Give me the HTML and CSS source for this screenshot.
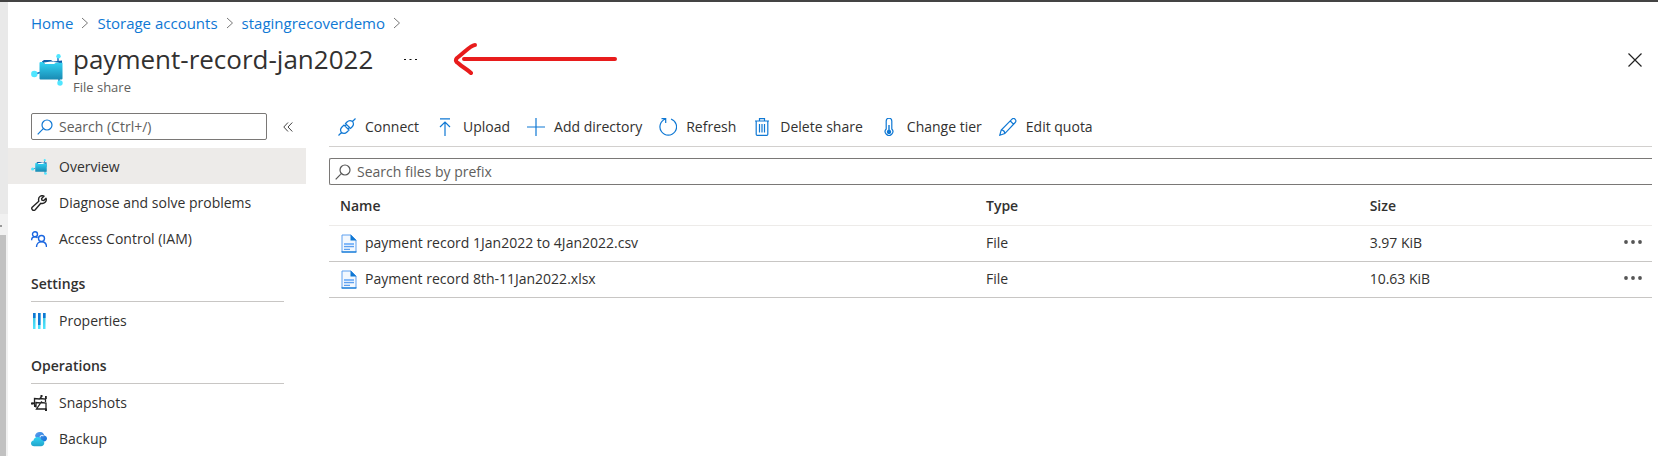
FILE: index.html
```html
<!DOCTYPE html>
<html lang="en">
<head>
<meta charset="utf-8">
<meta name="viewport" content="width=device-width, initial-scale=1">
<title>payment-record-jan2022 - File share</title>
<link rel="stylesheet" href="styles.css">
</head>
<body>
<svg class="defs" aria-hidden="true">
  <defs>
    <linearGradient id="cyan" x1="0" y1="0" x2="0" y2="1"><stop offset="0" stop-color="#32d4f5"/><stop offset="1" stop-color="#198ab3"/></linearGradient>
    <linearGradient id="bars" x1="0" y1="0" x2="0" y2="1"><stop offset="0" stop-color="#32bedd"/><stop offset="1" stop-color="#50e6ff"/></linearGradient>
    <linearGradient id="blue" x1="0" y1="0" x2="1" y2="1"><stop offset="0" stop-color="#5ea0ef"/><stop offset="1" stop-color="#0f6fd6"/></linearGradient>
    <linearGradient id="cloud" x1="0" y1="0" x2="0" y2="1"><stop offset="0" stop-color="#32d4f5"/><stop offset="1" stop-color="#22a5cb"/></linearGradient>
    <symbol id="share" viewBox="0 0 32 32">
      <path d="M4 20 9 18.500M27 7V3M28 24v5" stroke="#0f6cbd" stroke-width="1.400" fill="none"/>
      <path d="M11 7.500 13 6h7l2 1.500 9-1v9H11z" fill="#0f5fa8"/>
      <path d="M13 8.500 20 7.500l8 1.200-4 2.300H14z" fill="#fff"/>
      <path d="M9.500 8H12l2 2h9l2-1.200h6.500V24.500a1 1 0 0 1-1 1H9.500a1 1 0 0 1-1-1V9a1 1 0 0 1 1-1z" fill="url(#cyan)"/>
      <circle cx="3.300" cy="20" r="3.200" fill="#50e6ff"/><circle cx="27.500" cy="2.300" r="2.200" fill="#50e6ff"/><circle cx="29" cy="29" r="2.700" fill="#50e6ff"/>
    </symbol>
    <symbol id="file" viewBox="0 0 16 19">
      <path d="M1 1h9l5 5v12H1z" fill="#f3f8fe" stroke="#5ea0ef"/>
      <path d="M9.500.500 15.500 6.500h-6z" fill="#0f78d4"/><path d="M.500 18H15.500" stroke="#0f78d4" stroke-width="1.200"/>
      <path d="M3 9h10v2.200H3z" fill="#83b9f9"/><path d="M3 12.700h10M3 15.300h6" stroke="#5ea0ef" stroke-width="1.200"/>
    </symbol>
    <symbol id="lens" viewBox="0 0 16 16"><g fill="none" stroke="currentColor" stroke-width="1.200"><circle cx="10" cy="6" r="5"/><path d="M6.300 9.700.700 15.300"/></g></symbol>
    <symbol id="chevron" viewBox="0 0 8 12"><path d="m1 1 5.500 5L1 11" fill="none" stroke="currentColor"/></symbol>
    <symbol id="dots" viewBox="0 0 18 4"><g fill="currentColor"><circle cx="2" cy="2" r="1.900"/><circle cx="9" cy="2" r="1.900"/><circle cx="16" cy="2" r="1.900"/></g></symbol>
  </defs>
</svg>

<div class="shell">
  <div class="rail" aria-hidden="true"><div class="rail-head"></div><div class="rail-arrow"></div><div class="rail-thumb"></div></div>
  <div class="blade">
    <nav class="crumbs" aria-label="Breadcrumb">
      <a href="#">Home</a><svg class="chev"><use href="#chevron"/></svg>
      <a href="#">Storage accounts</a><svg class="chev"><use href="#chevron"/></svg>
      <a href="#">stagingrecoverdemo</a><svg class="chev"><use href="#chevron"/></svg>
    </nav>

    <header class="head">
      <svg class="head-icon"><use href="#share"/></svg>
      <div class="head-text">
        <div class="title-row">
          <h1>payment-record-jan2022</h1>
          <button class="plain more" aria-label="More"><svg width="13" height="3" viewBox="0 0 13 3"><path d="M0 1h2v1H0zM5.500 1h2v1h-2zM11 1h2v1h-2z" fill="#111"/></svg></button>
        </div>
        <p>File share</p>
      </div>
      <button class="plain close" aria-label="Close"><svg width="14" height="14" viewBox="0 0 14 14"><path d="m.500.500 13 13m0-13-13 13" stroke="#222" stroke-width="1.200"/></svg></button>
      <svg class="arrow" viewBox="0 0 166 34" aria-hidden="true"><path d="M11 17H162M22 3C18 3 12 10 4 16c-2 2-1 4 1 5 4 4 9 6 13 10" fill="none" stroke="#e81c1c" stroke-width="4" stroke-linecap="round" stroke-linejoin="round"/></svg>
    </header>

    <div class="body">
      <aside class="side">
        <div class="side-search">
          <label class="box"><svg class="lens blue"><use href="#lens"/></svg><input type="text" placeholder="Search (Ctrl+/)" aria-label="Search menu"></label>
          <button class="plain" aria-label="Collapse"><svg width="10" height="10" viewBox="0 0 10 10"><path d="M5 .500.800 5 5 9.500M9.300.500 5 5l4.300 4.500" fill="none" stroke="#444"/></svg></button>
        </div>
        <nav aria-label="Resource menu">
          <a class="item active" href="#"><svg class="ico"><use href="#share"/></svg>Overview</a>
          <a class="item" href="#"><svg class="ico" viewBox="0 0 16 16"><path d="M13 1.200C10.500-.200 7.300 1.500 7.600 4.800c0 .700.100 1 .200 1.400L1.200 12.200a2 2 0 0 0 2.800 2.800L9.800 8.300c3.400 1 6.400-2 5.200-5L12.800 5.500 10.900 5.100 10.600 3.400z" fill="none" stroke="#222" stroke-width="1.400" stroke-linejoin="round"/></svg>Diagnose and solve problems</a>
          <a class="item" href="#"><svg class="ico" viewBox="0 0 16 16"><g fill="none" stroke="#1a66e0" stroke-width="1.400"><circle cx="4" cy="3.200" r="2.500"/><path d="M.600 9.300C.600 7 2 5.800 4 5.800c1.200 0 2 .400 2.500 1"/><circle cx="10.500" cy="7.500" r="3"/><path d="M5.500 16c0-3.300 2-5.300 5-5.300s5 2 5 5.300"/></g></svg>Access Control (IAM)</a>
          <h2>Settings</h2>
          <a class="item" href="#"><svg class="ico" viewBox="0 0 16 16"><path d="M2 0h2.500v16H2zM7 0h2.500v16H7zM12 0h2.500v16H12z" fill="url(#bars)"/><path d="M2 0h2.500v5H2zM7 0h2.500v12H7zM12 0h2.500v5H12z" fill="#0f78d4"/></svg>Properties</a>
          <h2>Operations</h2>
          <a class="item" href="#"><svg class="ico" viewBox="0 0 16 16"><path d="M1 8.500 3.500 8M3.500 10.500V3.500L8.500 4l2-2.200M9 3.500l5.500.500V7M5 12.500V7.500L9.500 8l1.500-1.500M10 7.500l5 .500v6H5.500z" fill="none" stroke="#222" stroke-width="1.300"/><path d="M0 7.500h2.500v2H0zM9.500 0h2v2h-2zM14 1h1.800v3H14zM14 13.500h2V16h-2zM3 10h2v2H3z" fill="#222"/></svg>Snapshots</a>
          <a class="item" href="#"><svg class="ico" viewBox="0 0 16 16"><path d="M4 5c.500-3 3-4.500 5.500-4 2 .200 3.300 1.500 3.800 3.500 1.700.300 2.700 1.500 2.700 3s-1.300 3-3 3H8z" fill="url(#blue)"/><path d="M9 6.500c.200-2 2-2.700 3.600-1.500" fill="none" stroke="#d6e9ff" stroke-width="1.200"/><path d="M3.200 15.200C1.300 15.200 0 14 0 12.400c0-1.500 1-2.600 2.500-2.800C2.800 7.300 4.500 6 6.500 6c2 0 3.500 1.200 4 3 1.700.200 2.800 1.400 2.800 3 0 1.900-1.400 3.200-3.300 3.200z" fill="url(#cloud)"/></svg>Backup</a>
        </nav>
      </aside>

      <main class="main">
        <div class="toolbar" role="toolbar" aria-label="File share actions">
          <button class="cmd"><svg viewBox="0 0 18 18"><path d="M.500 17.500 3.500 14.500M14.500 3.500l3-3M3.500 14.500c-1.500-2-1-4 .500-5.500L6 7l5 5-2 2c-1.500 1.500-3.500 2-5.500.500zM14.500 3.500c1.500 2 1 4-.500 5.500L12.500 10.500l-5-5L9 4c1.500-1.500 3.500-2 5.500-.500zM7 8l2-2M10 11l2-2"/></svg>Connect</button>
          <button class="cmd"><svg viewBox="0 0 18 18"><path d="M4 .800h10M9 18V4M4 9l5-5 5 5"/></svg>Upload</button>
          <button class="cmd"><svg viewBox="0 0 18 18"><path d="M9 0v18M0 9h18"/></svg>Add directory</button>
          <button class="cmd"><svg viewBox="0 0 18 18"><path d="M12 1a8.300 8.300 0 1 1-5.500 0M2.500.700H6.700V5"/></svg>Refresh</button>
          <button class="cmd"><svg viewBox="0 0 18 18"><path d="M2 3h14M6.500 3V.700h5V3M3.200 3v13.300c0 .700.300 1.100 1 1.100h9.600c.700 0 1-.400 1-1.100V3M6.500 6v8.500M9 6v8.500M11.500 6v8.500"/></svg>Delete share</button>
          <button class="cmd"><svg viewBox="0 0 18 18"><path d="M6.200 11V3a2.800 2.800 0 0 1 5.600 0v8a3.800 3.800 0 1 1-5.600 0z"/><path d="M8.300 7h1.400v4.800a2.200 2.200 0 1 1-1.400 0z" fill="#0f78d4" stroke="none"/></svg>Change tier</button>
          <button class="cmd"><svg viewBox="0 0 18 18"><path d="M.800 17.200 2.200 12 13 1.200c1-1 2.300-.800 3.200.100s1 2.200 0 3.200L5.800 15.600zM11.300 3l3.600 3.600M2.200 12c2 0 3.600 1.500 3.600 3.600"/></svg>Edit quota</button>
        </div>

        <label class="box prefix"><svg class="lens"><use href="#lens"/></svg><input type="text" placeholder="Search files by prefix" aria-label="Search files by prefix"></label>

        <table class="files">
          <colgroup><col class="c-name"><col class="c-type"><col><col class="c-menu"></colgroup>
          <thead><tr><th>Name</th><th>Type</th><th>Size</th><th></th></tr></thead>
          <tbody>
            <tr><td><a class="file" href="#"><svg><use href="#file"/></svg>payment record 1Jan2022 to 4Jan2022.csv</a></td><td>File</td><td>3.97 KiB</td><td><button class="plain menu" aria-label="Row actions"><svg width="18" height="4"><use href="#dots"/></svg></button></td></tr>
            <tr><td><a class="file" href="#"><svg><use href="#file"/></svg>Payment record 8th-11Jan2022.xlsx</a></td><td>File</td><td>10.63 KiB</td><td><button class="plain menu" aria-label="Row actions"><svg width="18" height="4"><use href="#dots"/></svg></button></td></tr>
          </tbody>
        </table>
      </main>
    </div>
  </div>
</div>
</body>
</html>
```
FILE: styles.css
```css
* { box-sizing: border-box; }
body { margin: 0; background: #fff; color: #323130; font: 14px/20px "Segoe UI", "Open Sans", "Noto Sans", sans-serif; overflow: hidden; }
a { color: inherit; text-decoration: none; }
button, input { font: inherit; color: inherit; }
svg { display: block; flex: none; }
h1, h2, p { margin: 0; }
.defs { position: absolute; width: 0; height: 0; }
.plain { display: flex; align-items: center; justify-content: center; padding: 0; border: 0; background: none; }

.shell { display: flex; min-height: 100vh; border-top: 2px solid #444; }
.rail { display: flex; flex-direction: column; width: 8px; flex: none; background: #f1f1f1; }
.rail-head { height: 212px; background: #e9e9e9; }
.rail-arrow { width: 2px; height: 2px; margin: 11px 0 8px; background: #999; }
.rail-thumb { flex: 1; width: 6px; background: #c1c1c1; }
.blade { flex: 1; min-width: 0; padding: 11px 6px 0 0; }

.crumbs { display: flex; align-items: center; gap: 8px; padding-left: 23px; color: #0f78d4; font-size: 15px; }
.chev { width: 8px; height: 12px; color: #777; }

.head { position: relative; display: flex; padding: 8px 10px 0 23px; }
.head-icon { width: 32px; height: 32px; margin-top: 13px; }
.head-text { margin-left: 10px; }
.title-row { display: flex; align-items: center; gap: 31px; }
h1 { font-size: 26px; line-height: 36px; font-weight: 500; }
.head p { font-size: 13px; line-height: 20px; color: #605e5c; }
.more { height: 20px; }
.close { align-self: flex-start; height: 38px; margin-left: auto; }
.arrow { position: absolute; left: 445px; top: 9px; width: 166px; height: 34px; }

.body { display: flex; align-items: flex-start; gap: 23px; padding-top: 16px; }
.side { width: 298px; flex: none; }
.side-search { display: flex; align-items: center; gap: 16px; padding: 0 13px 8px 23px; }
.box { display: flex; align-items: center; flex: 1; height: 27px; padding: 0 5px; border: 1px solid #7a7876; border-radius: 2px; }
.box input { flex: 1; min-width: 0; padding: 0; border: 0; outline: 0; background: none; }
.box input::placeholder { color: #605e5c; opacity: 1; }
.lens { width: 16px; height: 16px; margin-right: 6px; color: #555; }
.blue { color: #0f78d4; }
.item { display: flex; align-items: center; gap: 12px; height: 36px; padding: 2px 0 0 23px; }
.active { background: #edebe9; }
.ico { width: 16px; height: 16px; }
h2 { margin: 0 22px 0 23px; padding: 18px 0 7px; border-bottom: 1px solid #c8c6c4; font-size: 14px; line-height: 20px; font-weight: 600; }

.main { flex: 1; min-width: 0; }
.toolbar { display: flex; gap: 17px; height: 34px; padding: 0 9px 5px; border-bottom: 1px solid #d2d0ce; }
.cmd { display: flex; align-items: center; gap: 9px; padding: 0; border: 0; background: none; white-space: nowrap; }
.cmd svg { width: 18px; height: 18px; fill: none; stroke: #0f78d4; stroke-width: 1.200; }
.prefix { margin-top: 11px; border-right: 0; border-radius: 2px 0 0 2px; }
.files { width: 100%; border-collapse: collapse; table-layout: fixed; }
.c-name { width: 646px; }
.c-type { width: 29%; }
.c-menu { width: 5%; }
th, td { height: 36px; padding: 0 10px 0 11px; border-bottom: 1px solid #c8c6c4; text-align: left; }
td:last-child { padding-bottom: 3px; }
th { height: 40px; padding-top: 2px; border-color: #edebe9; font-weight: 600; }
.file { display: flex; align-items: center; gap: 8px; padding-left: 1px; }
.file svg { width: 16px; height: 19px; }
.menu { margin-left: auto; color: #555; }
```
